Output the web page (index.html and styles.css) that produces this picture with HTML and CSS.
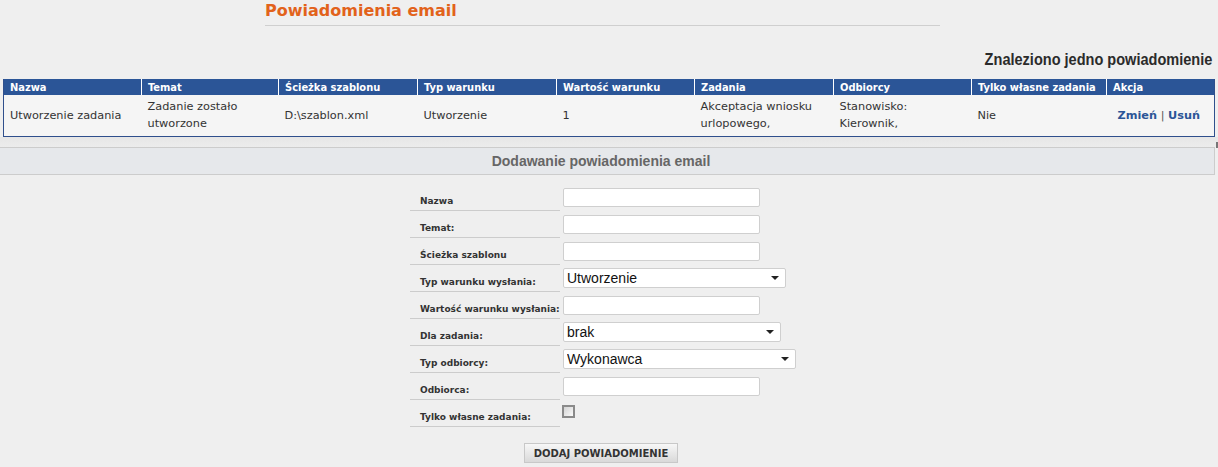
FILE: index.html
```html
<!DOCTYPE html>
<html lang="pl">
<head>
<meta charset="utf-8">
<title>Powiadomienia email</title>
<link rel="stylesheet" href="styles.css">
</head>
<body>
<div class="page">
  <h1 class="title">Powiadomienia email</h1>
  <div class="found"><span class="found-text">Znaleziono jedno powiadomienie</span></div>
  <table class="list">
    <colgroup>
      <col class="c1"><col class="c2"><col class="c3"><col class="c4"><col class="c5"><col class="c6"><col class="c7"><col class="c8"><col class="c9">
    </colgroup>
    <thead>
      <tr>
        <th>Nazwa</th><th>Temat</th><th>Ścieżka szablonu</th><th>Typ warunku</th><th>Wartość warunku</th><th>Zadania</th><th>Odbiorcy</th><th>Tylko własne zadania</th><th>Akcja</th>
      </tr>
    </thead>
    <tbody>
      <tr>
        <td>Utworzenie zadania</td>
        <td>Zadanie zostało utworzone</td>
        <td>D:\szablon.xml</td>
        <td>Utworzenie</td>
        <td>1</td>
        <td>Akceptacja wniosku urlopowego,</td>
        <td>Stanowisko: Kierownik,</td>
        <td>Nie</td>
        <td class="actions"><a href="#">Zmień</a> <span class="sep">|</span> <a href="#">Usuń</a></td>
      </tr>
    </tbody>
  </table>
  <div class="gap"><span class="mark"></span></div>
  <div class="section">
    <div class="band">Dodawanie powiadomienia email</div>
    <form class="form">
      <div class="row"><label class="lbl">Nazwa</label><div class="field"><input class="txt" type="text"></div></div>
      <div class="row"><label class="lbl">Temat:</label><div class="field"><input class="txt" type="text"></div></div>
      <div class="row"><label class="lbl">Ścieżka szablonu</label><div class="field"><input class="txt" type="text"></div></div>
      <div class="row"><label class="lbl">Typ warunku wysłania:</label><div class="field"><div class="sel w223"><select><option>Utworzenie</option></select><span class="arrow"></span></div></div></div>
      <div class="row"><label class="lbl">Wartość warunku wysłania:</label><div class="field"><input class="txt" type="text"></div></div>
      <div class="row"><label class="lbl">Dla zadania:</label><div class="field"><div class="sel w218"><select><option>brak</option></select><span class="arrow"></span></div></div></div>
      <div class="row"><label class="lbl">Typ odbiorcy:</label><div class="field"><div class="sel w233"><select><option>Wykonawca</option></select><span class="arrow"></span></div></div></div>
      <div class="row"><label class="lbl">Odbiorca:</label><div class="field"><input class="txt" type="text"></div></div>
      <div class="row"><label class="lbl">Tylko własne zadania:</label><div class="field"><input class="chk" type="checkbox"></div></div>
      <div class="buttons"><button type="button" class="btn">DODAJ POWIADOMIENIE</button></div>
    </form>
  </div>
</div>
</body>
</html>
```
FILE: styles.css
```css
* { box-sizing: border-box; }
html, body { margin: 0; padding: 0; }
body {
  background: #efefef;
  font-family: "DejaVu Sans", Verdana, sans-serif;
  color: #333;
  width: 1218px;
  height: 467px;
  overflow: hidden;
}
.page { position: relative; }
.title {
  margin: 0 0 0 265px;
  width: 675px;
  height: 26px;
  padding-top: 1px;
  font-family: "DejaVu Sans", Verdana, sans-serif;
  font-size: 16px;
  font-weight: bold;
  color: #e2621b;
  border-bottom: 1px solid #cfcfcf;
  line-height: 20px;
}
.found {
  margin-top: 23px;
  height: 30px;
  padding-right: 6px;
  text-align: right;
  font-family: "Liberation Sans", Arial, sans-serif;
  font-size: 17px;
  font-weight: bold;
  color: #2b2b2b;
  line-height: 22px;
}
.found-text {
  display: inline-block;
  transform: scaleX(0.855);
  transform-origin: right center;
}
.list {
  margin-left: 3px;
  width: 1211px;
  table-layout: fixed;
  border-collapse: collapse;
  border: 1px solid #2f4f8c;
  border-top: 0;
}
.c1 { width: 138px; } .c2 { width: 137px; } .c3 { width: 139px; } .c4 { width: 139px; }
.c5 { width: 138px; } .c6 { width: 139px; } .c7 { width: 138px; } .c8 { width: 135px; } .c9 { width: 108px; }
.list th {
  background: #2b5597;
  color: #fff;
  font-family: "DejaVu Sans Condensed", "DejaVu Sans", sans-serif;
  font-size: 11px;
  font-weight: bold;
  text-align: left;
  height: 16px;
  padding: 0 6px;
  line-height: 15px;
  border-left: 1px solid #fff;
  white-space: nowrap;
  overflow: hidden;
}
.list th:first-child { border-left: 0; }
.list td {
  background: #f5f5f5;
  font-size: 11.3px;
  height: 41px;
  padding: 0 12px 0 6px;
  line-height: 17px;
  color: #333;
  vertical-align: middle;
}
.list td.actions { padding: 0 0 0 11px; white-space: nowrap; }
.actions a { color: #2b5597; font-weight: bold; text-decoration: none; }
.actions .sep { color: #555; }
.gap {
  position: relative;
  height: 10px;
  background: linear-gradient(#e6e6e6, #ececec);
}
.mark {
  position: absolute;
  right: 0;
  top: 5px;
  width: 2px;
  height: 6px;
  background: #777;
}
.section { position: relative; }
.band {
  height: 28px;
  background: #e6e8eb;
  border-top: 1px solid #cccccc;
  border-bottom: 1px solid #cccccc;
  border-right: 1px solid #cccccc;
  width: 1215px;
  padding-right: 12px;
  text-align: center;
  font-family: "Liberation Sans", Arial, sans-serif;
  font-size: 14px;
  font-weight: bold;
  color: #666;
  line-height: 26px;
}
.form {
  padding: 9px 0 0 410px;
}
.row {
  display: grid;
  grid-template-columns: 150px auto;
  column-gap: 3px;
  height: 27px;
}
.lbl {
  border-bottom: 1px solid #cccccc;
  font-size: 9px;
  font-weight: bold;
  color: #333;
  padding: 0 0 4px 10px;
  display: flex;
  align-items: flex-end;
  white-space: nowrap;
  letter-spacing: 0;
}
.field { padding-top: 4px; }
.txt {
  display: block;
  width: 197px;
  height: 19px;
  border: 1px solid #cfcfcf;
  border-radius: 2px;
  background: #fff;
  margin: 0;
}
.sel {
  position: relative;
  height: 20px;
  margin-top: -1px;
}
.sel select {
  appearance: none;
  -webkit-appearance: none;
  width: 100%;
  height: 20px;
  border: 1px solid #cfcfcf;
  border-radius: 2px;
  background: #fff;
  font-family: "Liberation Sans", Arial, sans-serif;
  font-size: 14px;
  color: #111;
  padding: 0 0 0 3px;
  margin: 0;
}
.w223 { width: 223px; } .w218 { width: 218px; } .w233 { width: 233px; }
.sel .arrow {
  position: absolute;
  right: 7px;
  top: 8px;
  width: 0;
  height: 0;
  border-left: 4px solid transparent;
  border-right: 4px solid transparent;
  border-top: 4px solid #222;
}
.chk {
  appearance: none;
  -webkit-appearance: none;
  display: block;
  width: 13px;
  height: 13px;
  margin: 1px 0 0 -1px;
  border: 2px solid #8a8a8a;
  background: linear-gradient(135deg, #d4d4d4, #fafafa);
  border-radius: 0;
}
.buttons {
  padding: 15px 0 0 114px;
}
.btn {
  width: 154px;
  height: 20px;
  border: 1px solid #c8c8c8;
  background: linear-gradient(#f7f7f7, #d9d9d9);
  font-family: "DejaVu Sans", Verdana, sans-serif;
  font-size: 10px;
  font-weight: bold;
  color: #333;
  padding: 0;
  letter-spacing: 0;
}
```
